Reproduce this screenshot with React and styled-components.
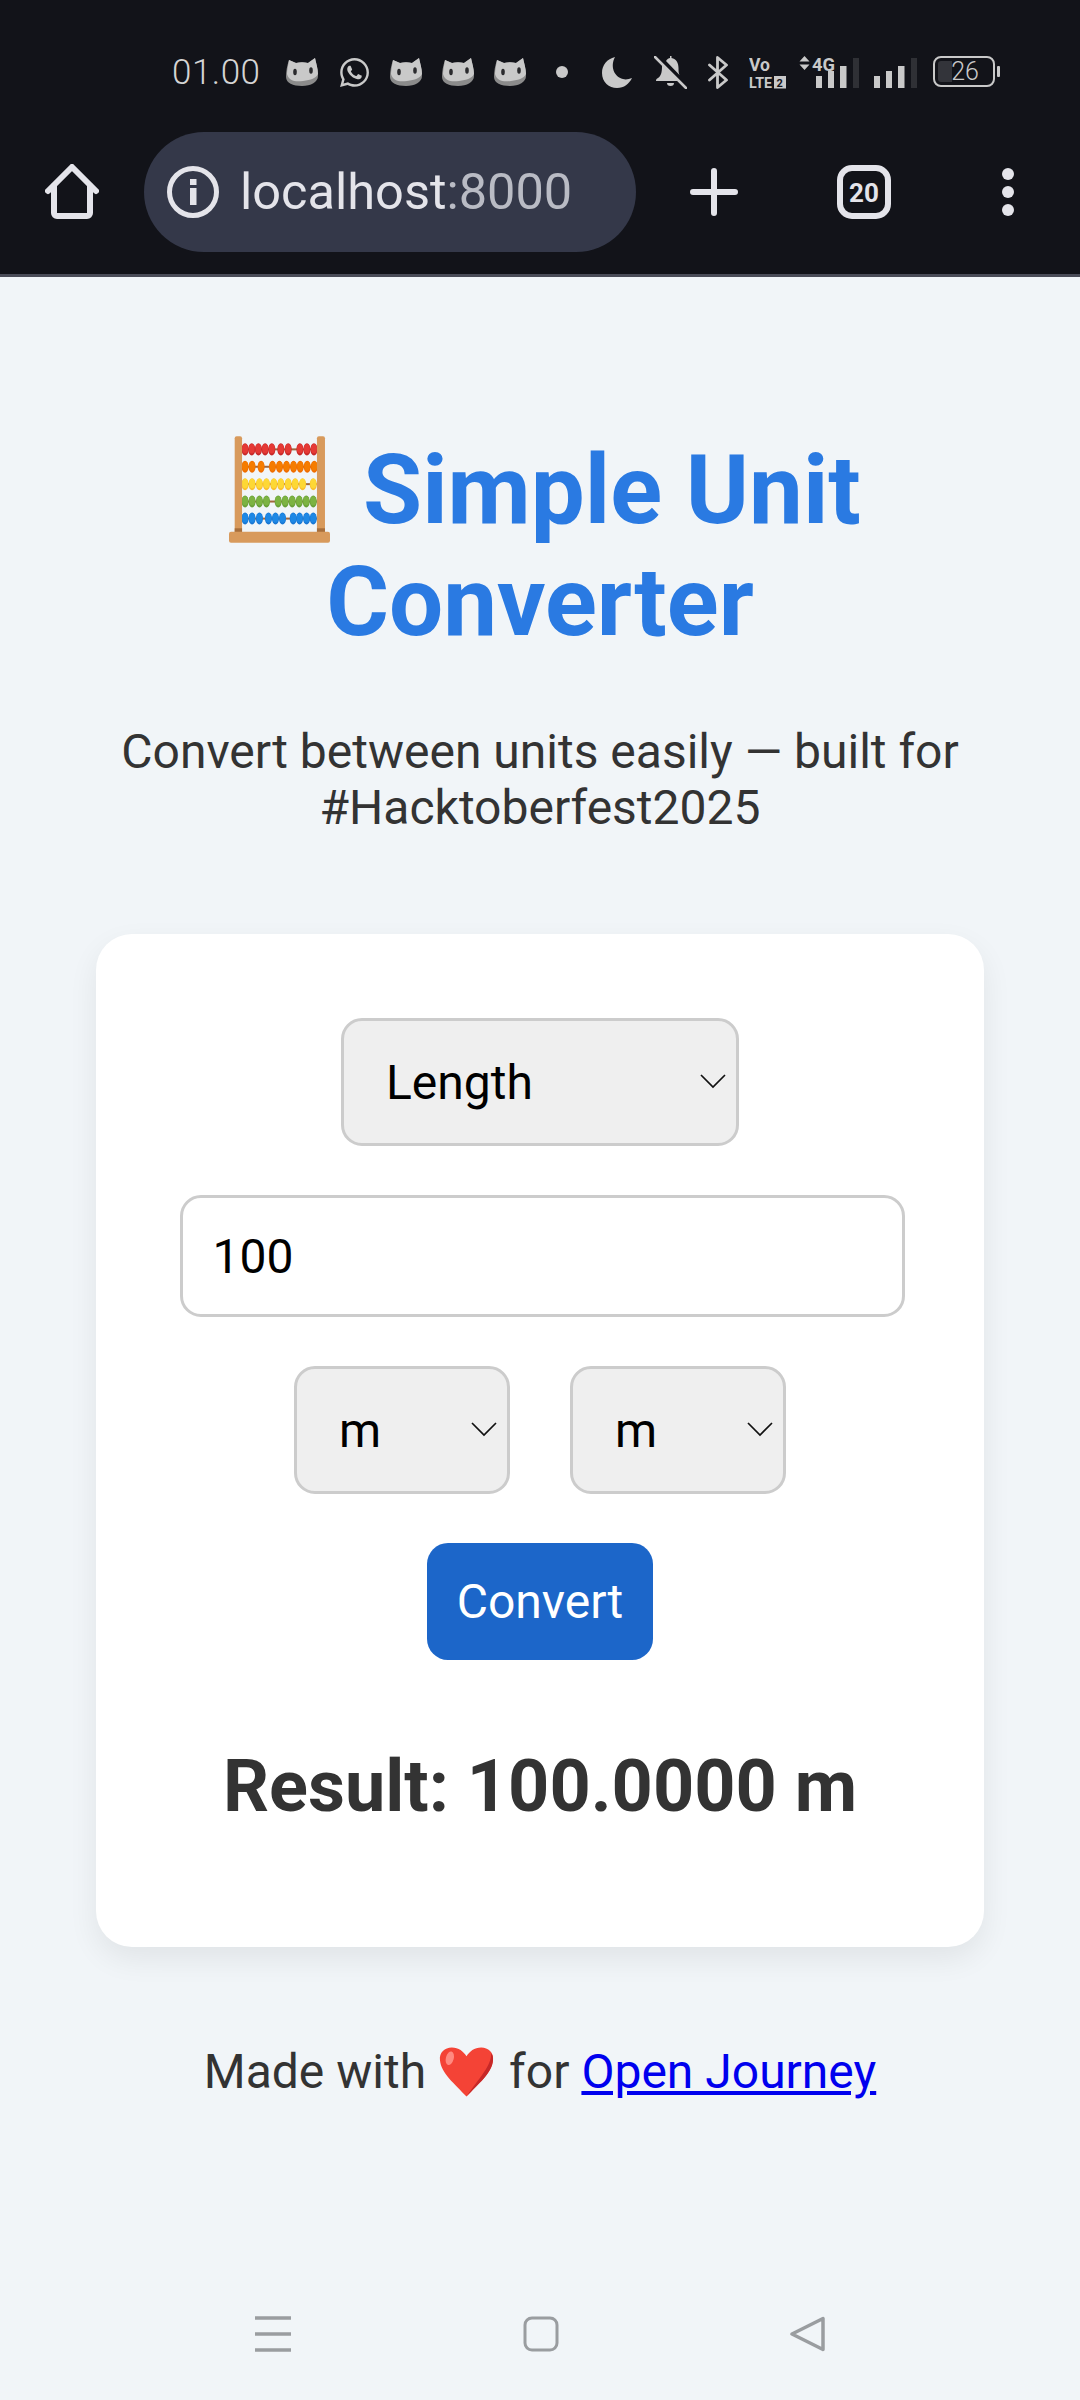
import React from "react";
import styled, { createGlobalStyle } from "styled-components";
import { FaWhatsapp } from "react-icons/fa";

const Global = createGlobalStyle`
  html, body { margin: 0; padding: 0; background: #f1f5f8; }
  * { box-sizing: border-box; }
  body { font-family: Roboto, "Liberation Sans", sans-serif; }
`;

const Screen = styled.div`
  width: 1080px;
  height: 2400px;
  display: flex;
  flex-direction: column;
  background: #f1f5f8;
  overflow: hidden;
`;

const StatusBar = styled.div`
  height: 130px;
  flex: none;
  padding: 14px 0 0 172px;
  display: flex;
  align-items: center;
  background: #121319;
  color: #c9c9c9;
`;

const Clock = styled.span`
  width: 88px;
  font-size: 35px;
  font-weight: 300;
  letter-spacing: 0.5px;
  color: #d4d4d4;
`;

const StatusSlot = styled.span`
  display: flex;
  flex: none;
  margin-left: ${(p) => p.$gap}px;
  margin-top: ${(p) => p.$top || 0}px;
  margin-bottom: ${(p) => p.$bottom || 0}px;
`;

const Toolbar = styled.div`
  height: 147px;
  flex: none;
  padding: 0 0 21px 45px;
  display: flex;
  align-items: center;
  background: #121319;
  border-bottom: 3px solid #4a4c58;
  color: #e4e4ea;
`;

const UrlPill = styled.div`
  width: 492px;
  height: 120px;
  margin-left: 45px;
  padding-left: 23px;
  display: flex;
  align-items: center;
  border-radius: 60px;
  background: #343849;
`;

const UrlText = styled.span`
  margin-left: 21px;
  font-size: 50.5px;
  color: #e4e4ea;
`;

const UrlPort = styled.span`
  color: #b9bbc4;
`;

const ToolSlot = styled.span`
  display: flex;
  flex: none;
  margin-left: ${(p) => p.$gap}px;
`;

const Main = styled.main`
  flex: 1;
  display: flex;
  flex-direction: column;
  align-items: center;
  padding-top: 157px;
`;

const Title = styled.h1`
  width: 800px;
  margin: 0;
  font-size: 96px;
  line-height: 112px;
  font-weight: 700;
  text-align: center;
  color: #2a7ae2;
`;

const TitleEmoji = styled.svg`
  display: inline-block;
  width: 101px;
  height: 107px;
  margin: -40px 9px -40px 10px;
  vertical-align: 20px;
`;

const Subtitle = styled.p`
  width: 888px;
  margin: 66px 0 0;
  font-size: 48px;
  line-height: 56px;
  text-align: center;
  color: #333;
`;

const Card = styled.section`
  width: 888px;
  height: 1013px;
  margin-top: 98px;
  padding-top: 84px;
  display: flex;
  flex-direction: column;
  align-items: center;
  background: #fff;
  border-radius: 36px;
  box-shadow: 0 12px 30px rgba(0, 0, 0, 0.07);
`;

const SelectWrap = styled.div`
  position: relative;
  width: ${(p) => p.$width}px;
  height: 128px;
  flex: none;
`;

const NativeSelect = styled.select`
  appearance: none;
  width: 100%;
  height: 100%;
  padding: 0 0 0 ${(p) => p.$pad}px;
  font: 400 48px Roboto, sans-serif;
  color: #000;
  background: #efefef;
  border: 3px solid #ccc;
  border-radius: 21px;
  outline: none;
`;

const Chevron = styled.svg`
  position: absolute;
  top: 56px;
  right: 13px;
  width: 26px;
  height: 15px;
  pointer-events: none;
`;

const NumberInput = styled.input`
  width: 725px;
  height: 122px;
  margin: 49px 0 0 4px;
  padding: 0 30px;
  flex: none;
  font: 400 48px Roboto, sans-serif;
  color: #000;
  background: #fff;
  border: 3px solid #ccc;
  border-radius: 21px;
  outline: none;
`;

const UnitRow = styled.div`
  margin-top: 49px;
  display: flex;
  gap: 60px;
`;

const ConvertButton = styled.button`
  width: 226px;
  height: 117px;
  margin-top: 49px;
  flex: none;
  font: 400 48px Roboto, sans-serif;
  color: #fff;
  background: #1c66c9;
  border: none;
  border-radius: 21px;
`;

const Result = styled.h2`
  margin: 85px 0 0;
  font-size: 72px;
  line-height: 84px;
  font-weight: 700;
  color: #333;
`;

const Footer = styled.footer`
  margin-top: 97px;
  display: flex;
  align-items: center;
  font-size: 48px;
  line-height: 56px;
  color: #333;
  white-space: pre;
`;

const Heart = styled.svg`
  width: 55px;
  height: 50px;
  margin: 0 15px 0 13px;
  flex: none;
`;

const FooterLink = styled.a`
  margin-left: 12px;
  color: #0000ee;
  text-decoration: underline;
`;

const NavBar = styled.nav`
  height: 134px;
  flex: none;
  padding: 2px 0 0 255px;
  display: flex;
  align-items: center;
  color: #9a9da0;
`;

const NavSlot = styled.span`
  display: flex;
  margin-left: ${(p) => p.$gap || 0}px;
`;

const Cat = () => (
  <svg width="34" height="30" viewBox="0 0 34 30">
    <path d="M1 20C1 14 2 9 4 3l7 3c4-1 8-1 12 0l7-5c1 5 3 11 3 18 0 6-7 10-16 10S1 26 1 20z" fill="#8b8b8b" />
    <path d="M2 17c0-4 1-8 2-14l7 3c4-1 8-1 12 0l7-5c1 5 3 10 3 16-2 4-7 6-15 7-8 1-14 0-16-7z" fill="#c9c9c9" />
    <ellipse cx="10" cy="15" rx="1.8" ry="3.2" fill="#2b2b2e" />
    <ellipse cx="26" cy="13.5" rx="1.8" ry="3.2" fill="#2b2b2e" />
  </svg>
);

const Moon = () => (
  <svg width="30" height="31" viewBox="0 0 30 31">
    <path d="M13 0C5 2 0 8 0 16c0 9 7 15 15 15 7 0 12-4 15-10-3 1-6 2-9 1C12 20 8 9 13 0z" fill="#c9c9c9" />
  </svg>
);

const BellOff = () => (
  <svg width="33" height="33" viewBox="0 0 33 33" fill="#c9c9c9">
    <path d="M8 11c0-1 0-2 1-3l15 17H2c0-1 0-2 2-3 3-2 4-6 4-11z" />
    <path d="M12 5c1-2 3-3 4-3V0h1.500v2c5 1 7 5 7 10 0 3 0 5 1 7z" />
    <path d="M13 27h7a3.500 3 0 0 1-7 0z" />
    <path d="M1 1l31 31" stroke="#c9c9c9" strokeWidth="2.500" strokeLinecap="round" />
  </svg>
);

const Bluetooth = () => (
  <svg width="21" height="33" viewBox="0 0 21 33" fill="none" stroke="#c9c9c9" strokeWidth="2.800" strokeLinejoin="round" strokeLinecap="round">
    <path d="M1.500 9l17 15L9.500 31.500V1.500L18.500 9 1.500 24" />
  </svg>
);

const VoLte = () => (
  <svg width="38" height="49" viewBox="0 -8 38 49" fill="#c9c9c9">
    <text x="0" y="15" fontFamily="Roboto" fontWeight="700" fontSize="19" textLength="21" lengthAdjust="spacingAndGlyphs">Vo</text>
    <text x="0" y="32" fontFamily="Roboto" fontWeight="700" fontSize="14" textLength="23" lengthAdjust="spacingAndGlyphs">LTE</text>
    <rect x="25" y="20" width="12" height="12.500" fill="#c9c9c9" />
    <text x="27.500" y="30.500" fontFamily="Roboto" fontWeight="700" fontSize="11" fill="#121319">2</text>
  </svg>
);

const Bars = ({ offset }) => (
  <>
    <rect x={offset} y="20" width="6" height="12" fill="#c9c9c9" />
    <rect x={offset + 12} y="15" width="6" height="17" fill="#c9c9c9" />
    <rect x={offset + 24} y="10" width="6.500" height="22" fill="#c9c9c9" />
    <rect x={offset + 37} y="2" width="6" height="30" fill="#2f3035" />
  </>
);

const Network = () => (
  <svg width="60" height="41" viewBox="0 -8 60 41">
    <path d="M5.500 0l5 5.500H.5zM5.500 14l5-5.500H.5z" fill="#c9c9c9" />
    <text x="13" y="15" fontFamily="Roboto" fontWeight="700" fontSize="18" textLength="23" lengthAdjust="spacingAndGlyphs" fill="#c9c9c9">4G</text>
    <Bars offset={17} />
  </svg>
);

const Network2 = () => (
  <svg width="43" height="33" viewBox="0 0 43 33">
    <Bars offset={0} />
  </svg>
);

const Battery = () => (
  <svg width="67" height="32" viewBox="0 0 67 32">
    <rect x="1" y="1" width="60" height="29" rx="7" fill="none" stroke="#c9c9c9" strokeWidth="2" />
    <path d="M8 5h11v21H8a3 3 0 0 1-3-3V8a3 3 0 0 1 3-3z" fill="#33343a" />
    <rect x="64" y="10" width="3" height="11" rx="1" fill="#c9c9c9" />
    <text x="32" y="24" textAnchor="middle" fontFamily="Roboto" fontWeight="300" fontSize="25" fill="#c9c9c9">26</text>
  </svg>
);

const HomeIcon = () => (
  <svg width="54" height="55" viewBox="0 0 54 55" fill="none" stroke="#e4e4ea" strokeWidth="6" strokeLinejoin="round" strokeLinecap="round">
    <path d="M3 27L27 3l24 24" />
    <path d="M9 22v27a3 3 0 0 0 3 3h30a3 3 0 0 0 3-3V22" />
  </svg>
);

const InfoIcon = () => (
  <svg width="52" height="52" viewBox="0 0 52 52">
    <circle cx="26" cy="26" r="23.500" fill="none" stroke="#e4e4ea" strokeWidth="5" />
    <rect x="23" y="13" width="6.500" height="6" fill="#e4e4ea" />
    <rect x="23" y="22" width="6.500" height="17" fill="#e4e4ea" />
  </svg>
);

const PlusIcon = () => (
  <svg width="48" height="48" viewBox="0 0 48 48" stroke="#e4e4ea" strokeWidth="6" strokeLinecap="round">
    <path d="M3 24h42M24 3v42" />
  </svg>
);

const TabsIcon = () => (
  <svg width="54" height="54" viewBox="0 0 54 54">
    <rect x="3" y="3" width="48" height="48" rx="12" fill="none" stroke="#e4e4ea" strokeWidth="6" />
    <text x="27" y="37" textAnchor="middle" fontFamily="Roboto" fontWeight="700" fontSize="26" fill="#e4e4ea">20</text>
  </svg>
);

const MenuIcon = () => (
  <svg width="12" height="48" viewBox="0 0 12 48" fill="#e4e4ea">
    <circle cx="6" cy="6" r="6" />
    <circle cx="6" cy="24" r="6" />
    <circle cx="6" cy="42" r="6" />
  </svg>
);

const beadRows = [
  { y: 120, color: "#e53935", dark: "#c62828", xs: [133, 153, 173, 193, 213, 240, 262, 297, 318, 339] },
  { y: 172, color: "#f57c00", dark: "#ef6c00", xs: [133, 154, 181, 215, 236, 257, 278, 298, 319, 340] },
  { y: 224, color: "#fdd835", dark: "#fbc02d", xs: [133, 154, 176, 197, 219, 240, 262, 283, 305, 337] },
  { y: 276, color: "#7cb342", dark: "#689f38", xs: [133, 154, 176, 197, 232, 253, 274, 295, 316, 337] },
  { y: 327, color: "#1e88e5", dark: "#1976d2", xs: [133, 154, 176, 203, 224, 245, 277, 296, 317, 337] },
];

const AbacusArt = () => (
  <TitleEmoji viewBox="85 80 302 320">
    {beadRows.map((row) => (
      <g key={row.y}>
        <rect x="124" y={row.y - 3} width="224" height="6" fill="#a1673c" />
        {row.xs.map((x) => (
          <g key={x}>
            <ellipse cx={x} cy={row.y} rx="10.500" ry="18" fill={row.dark} />
            <ellipse cx={x} cy={row.y - 2} rx="9" ry="14" fill={row.color} />
          </g>
        ))}
      </g>
    ))}
    <rect x="102" y="81" width="22" height="290" rx="6" fill="#d89a5c" />
    <rect x="348" y="81" width="24" height="290" rx="6" fill="#d89a5c" />
    <rect x="102" y="356" width="22" height="12" fill="#a86f3c" />
    <rect x="348" y="356" width="24" height="12" fill="#a86f3c" />
    <rect x="85" y="366" width="302" height="33" rx="6" fill="#d89a5c" />
  </TitleEmoji>
);

const ChevronIcon = () => (
  <Chevron viewBox="0 0 26 15" fill="none" stroke="#111" strokeWidth="1.700">
    <path d="M1 1l12 12L25 1" />
  </Chevron>
);

const Select = ({ width, pad, options }) => (
  <SelectWrap $width={width}>
    <NativeSelect $pad={pad} defaultValue={options[0]}>
      {options.map((o) => (
        <option key={o}>{o}</option>
      ))}
    </NativeSelect>
    <ChevronIcon />
  </SelectWrap>
);

const units = ["m", "km", "cm", "mm"];

export default function App() {
  return (
    <Screen>
      <Global />
      <StatusBar>
        <Clock>01.00</Clock>
        <StatusSlot $gap={25}><Cat /></StatusSlot>
        <StatusSlot $gap={19}><FaWhatsapp size={33} /></StatusSlot>
        <StatusSlot $gap={18}><Cat /></StatusSlot>
        <StatusSlot $gap={18}><Cat /></StatusSlot>
        <StatusSlot $gap={18}><Cat /></StatusSlot>
        <StatusSlot $gap={29}>
          <svg width="12" height="12" viewBox="0 0 12 12"><circle cx="6" cy="6" r="6" fill="#c9c9c9" /></svg>
        </StatusSlot>
        <StatusSlot $gap={34}><Moon /></StatusSlot>
        <StatusSlot $gap={22}><BellOff /></StatusSlot>
        <StatusSlot $gap={21}><Bluetooth /></StatusSlot>
        <StatusSlot $gap={20} $top={-8} $bottom={-8}><VoLte /></StatusSlot>
        <StatusSlot $gap={12} $top={-8}><Network /></StatusSlot>
        <StatusSlot $gap={15}><Network2 /></StatusSlot>
        <StatusSlot $gap={16}><Battery /></StatusSlot>
      </StatusBar>
      <Toolbar>
        <ToolSlot $gap={0}><HomeIcon /></ToolSlot>
        <UrlPill>
          <InfoIcon />
          <UrlText>localhost<UrlPort>:8000</UrlPort></UrlText>
        </UrlPill>
        <ToolSlot $gap={54}><PlusIcon /></ToolSlot>
        <ToolSlot $gap={99}><TabsIcon /></ToolSlot>
        <ToolSlot $gap={111}><MenuIcon /></ToolSlot>
      </Toolbar>
      <Main>
        <Title>
          <AbacusArt /> Simple Unit Converter
        </Title>
        <Subtitle>Convert between units easily — built for #Hacktoberfest2025</Subtitle>
        <Card>
          <Select width={398} pad={42} options={["Length", "Weight", "Temperature"]} />
          <NumberInput type="number" defaultValue="100" />
          <UnitRow>
            <Select width={216} pad={42} options={units} />
            <Select width={216} pad={42} options={units} />
          </UnitRow>
          <ConvertButton>Convert</ConvertButton>
          <Result>Result: 100.0000 m</Result>
        </Card>
        <Footer>
          Made with
          <Heart viewBox="0 0 56 50">
            <path d="M28 50C16 37 2 26 1 13 0 5 6 0 13 0c7 0 12 4 15 9 3-5 8-9 15-9 7 0 13 5 12 13-1 13-15 24-27 37z" fill="#f44336" />
            <path d="M28 50c12-13 26-24 27-37 0-3 0-5-2-7 1 12-12 25-25 44z" fill="#c62828" />
            <ellipse cx="11" cy="11" rx="4" ry="7" fill="#ff8a80" transform="rotate(15 11 11)" />
          </Heart>
          for
          <FooterLink href="#">Open Journey</FooterLink>
        </Footer>
      </Main>
      <NavBar>
        <NavSlot>
          <svg width="36" height="36" viewBox="0 0 36 36" stroke="#9a9da0" strokeWidth="3.500">
            <path d="M0 2h36M0 18h36M0 34h36" />
          </svg>
        </NavSlot>
        <NavSlot $gap={232}>
          <svg width="36" height="36" viewBox="0 0 36 36">
            <rect x="2" y="2" width="32" height="32" rx="7" fill="none" stroke="#9a9da0" strokeWidth="3" />
          </svg>
        </NavSlot>
        <NavSlot $gap={231}>
          <svg width="36" height="36" viewBox="0 0 36 36">
            <path d="M33 2.500v31L2 18z" fill="none" stroke="#9a9da0" strokeWidth="3.500" strokeLinejoin="round" />
          </svg>
        </NavSlot>
      </NavBar>
    </Screen>
  );
}
